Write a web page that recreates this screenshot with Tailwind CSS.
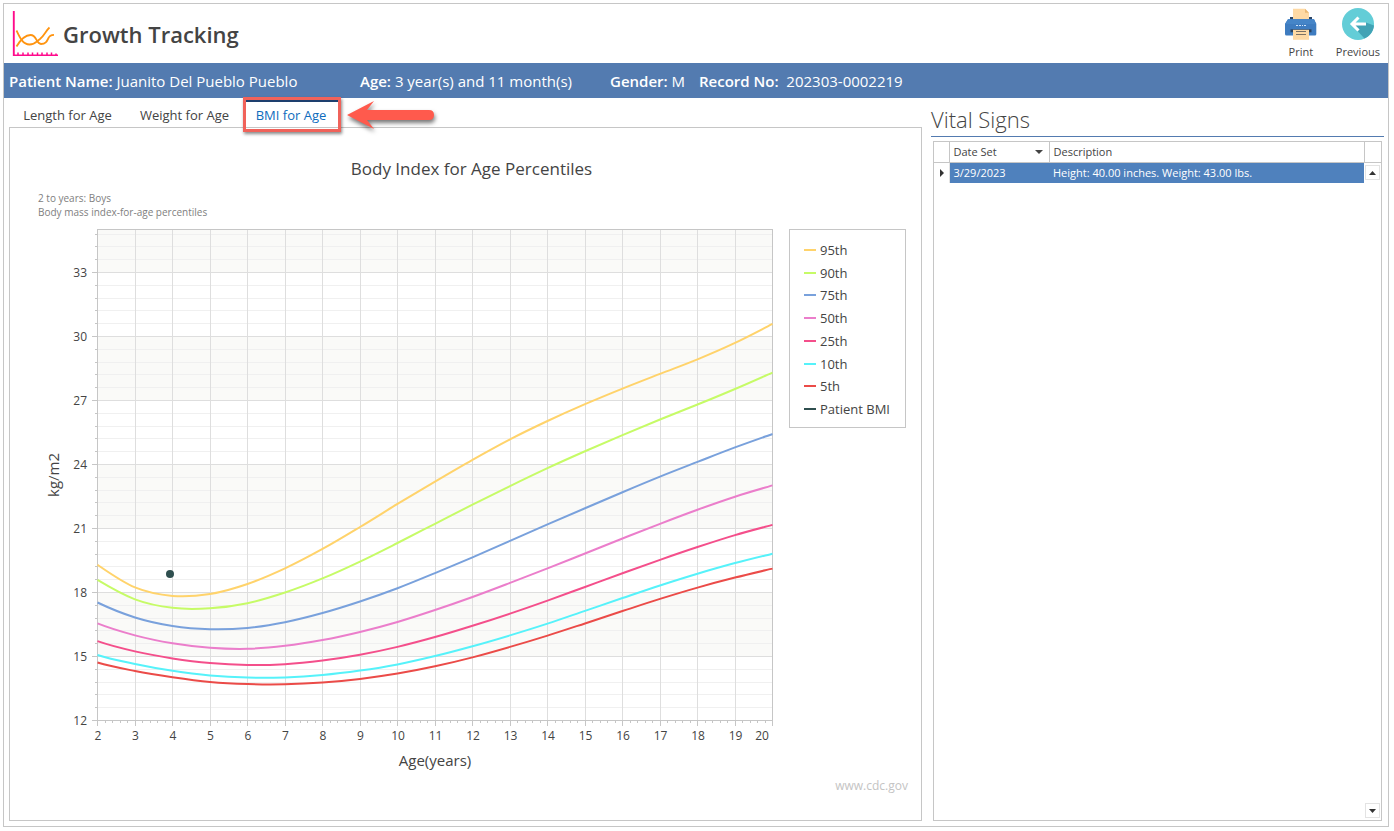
<!DOCTYPE html>
<html lang="en">
<head>
    <meta charset="UTF-8">
    <meta name="viewport" content="width=device-width, initial-scale=1.0">
    <title>Growth Tracking</title>
    <script src="https://cdn.jsdelivr.net/npm/@tailwindcss/browser@4"></script>
</head>
<body class="h-screen bg-white pt-[3px] pr-[5px] pb-1 pl-[3px] font-['Open_Sans','Noto_Sans',sans-serif] text-[#444]">

<div class="flex h-full flex-col border border-[#c6c6c6]">

    <!-- Title bar -->
    <header class="flex h-[59px] shrink-0 items-center justify-between pr-2 pl-2">
        <div class="flex items-center gap-1">
            <svg class="h-[47px] w-[47px]" viewBox="0 0 47 47" fill="none">
                <path d="M2.500 1V45.500" stroke="#ff6fb4" stroke-width="1"/>
                <path d="M1.600 1V46" stroke="#ff0a8c" stroke-width="1.500"/>
                <path d="M1 45.300H46" stroke="#ff0a8c" stroke-width="1.500"/>
                <path d="M6 42.500V45M11 42.500V45M16 42.500V45M20.500 42.500V45M25.500 42.500V45M30 42.500V45M35 42.500V45M39.500 42.500V45M44 43.500V45" stroke="#ff0a8c" stroke-width="1.500"/>
                <path d="M4.500 36.500C9 29 13 25 18.500 25C25 25 24 34 29 34C34 34 35 31 36.500 28C37.500 25.500 39 25 42 24.800" stroke="#ff9410" stroke-width="1.800"/>
                <path d="M4.500 20.500C8 28 11 34.500 17.500 34.500C23 34.500 25 31 28 29C32 26 33.500 21 37.500 17.500" stroke="#ff9410" stroke-width="1.800"/>
            </svg>
            <h1 class="pt-[2px] text-[22px] font-semibold">Growth Tracking</h1>
        </div>
        <div class="flex gap-[18px] pb-[2px] text-[11px]">
            <button type="button" class="flex flex-col items-center gap-1">
                <svg class="h-[34px] w-[34px]" viewBox="0 0 34 34">
                    <path d="M6 11h22v3H6z" fill="#2d4666"/>
                    <path d="M9 2.700h12l4 4V13.500H9z" fill="#fed9a4"/>
                    <path d="M21 2.700l4 4h-4z" fill="#e9b876"/>
                    <path d="M4 13.300h26l2.300 4.700v10q0 1.500-1.500 1.500H2.500Q1 29.500 1 28V18z" fill="#3e7cc0"/>
                    <path d="M4 13.300h26l2.300 4.700H1z" fill="#4585c8"/>
                    <path d="M12 19.500h2M15 19.500h2M18 19.500h1M20 19.500h2" stroke="#cfe5fb"/>
                    <path d="M6.500 23.300h21v3h-21z" fill="#2a435f"/>
                    <path d="M9 23.800h16v10H9z" fill="#fed9a4"/>
                    <path d="M12 25.500h10M12 28.500h10" stroke="#7c7164"/>
                </svg>
                <span class="leading-4">Print</span>
            </button>
            <button type="button" class="flex flex-col items-center gap-1">
                <svg class="h-[34px] w-[34px]" viewBox="0 0 34 34">
                    <circle cx="17" cy="18" r="16" fill="#63cdd7"/>
                    <path d="M11 19l12.500 13.500c5-2 9-7 9.500-13L25 16.500z" fill="#41a3b5"/>
                    <path d="M25 18H11M17.500 11.500l-6.500 6.500 6.500 6.500" fill="none" stroke="#fff" stroke-width="3"/>
                </svg>
                <span class="leading-4">Previous</span>
            </button>
        </div>
    </header>

    <!-- Patient information -->
    <div class="flex h-[35px] shrink-0 items-center bg-[#537bb0] pt-[2px] pl-[5px] text-[15px] whitespace-pre text-white">
        <p class="w-[351px]"><b class="font-semibold">Patient Name:</b> Juanito Del Pueblo Pueblo</p>
        <p class="w-[250px]"><b class="font-semibold">Age:</b> 3 year(s) and 11 month(s)</p>
        <p class="w-[89px]"><b class="font-semibold">Gender:</b> M</p>
        <p><b class="font-semibold">Record No:</b>  202303-0002219</p>
    </div>

    <main class="flex min-h-0 flex-1 gap-[9px] pr-1 pb-[5px] pl-[5px]">

        <!-- Charts -->
        <section class="flex min-w-0 flex-1 flex-col">
            <div role="tablist" class="flex h-[29px] shrink-0 text-[13px]">
                <button type="button" role="tab" class="w-[117px] pt-[6px]">Length for Age</button>
                <button type="button" role="tab" class="w-[117px] pt-[6px]">Weight for Age</button>
                <div class="relative mt-[2px] w-[96px]">
                    <button type="button" role="tab" aria-selected="true" class="h-full w-full border-t-2 border-[#1d3f6e] pt-[2px] text-[#0e6cbd]">BMI for Age</button>
                    <div class="absolute -top-[3px] left-0 h-[35px] w-[98px] border-3 border-[#f0625a] shadow-[1px_2px_3px_#0007]"></div>
                    <svg class="absolute -top-1 left-[102px] h-[40px] w-[94px] drop-shadow-[1px_3px_2px_#0008]" viewBox="0 0 94 40">
                        <path d="M2 19L29 5L22 14H84Q89 14 89 19T84 24H22L29 33Z" fill="#ff5a4d"/>
                    </svg>
                </div>
            </div>

            <div class="flex min-h-0 flex-1 flex-col border border-[#c6c6c6]">
                <h2 class="mt-[29px] pl-3 text-center text-[17px] leading-6">Body Index for Age Percentiles</h2>
                <p class="mt-[10px] pl-7 text-[10px] leading-[14px] text-[#808080]">2 to years: Boys<br>Body mass index-for-age percentiles</p>
                <div class="mt-[3px] flex pr-[15px]">
                    <svg id="chart" class="min-w-0 flex-1" viewBox="0 0 779 550" role="img" aria-label="Body mass index-for-age percentiles"></svg>
                    <ul id="legend" class="mt-[7px] flex h-[199px] w-[117px] flex-col justify-between border border-[#c6c6c6] pt-[9px] pb-[7px] pl-[14px] text-[13px]"></ul>
                </div>
                <a href="#" class="mt-[6px] mr-[13px] self-end text-[12px] leading-4 text-[#c4c4c4]">www.cdc.gov</a>
            </div>
        </section>

        <!-- Vital signs list -->
        <section class="flex w-[453px] shrink-0 flex-col">
            <h2 class="h-[39px] shrink-0 border-b border-[#537bb0] pt-[5px] text-[22px] leading-[33px] font-light">Vital Signs</h2>
            <div class="mt-1 mr-[2px] ml-[2px] flex min-h-0 flex-1 flex-col border border-[#c6c6c6]">
                <table class="w-full table-fixed text-left text-[11px]">
                    <thead>
                        <tr class="h-[20px] border-b border-[#c6c6c6]">
                            <th class="w-[15px] border-r border-[#c6c6c6]"></th>
                            <th class="w-[100px] border-r border-[#c6c6c6] px-1 font-normal">
                                <button type="button" class="flex w-full items-center justify-between pr-[2px]">Date Set
                                    <svg class="h-1 w-2" viewBox="0 0 8 4"><path d="M0 0h8L4 4z" fill="#444"/></svg>
                                </button>
                            </th>
                            <th class="border-r border-[#c6c6c6] px-1 font-normal">Description</th>
                            <th class="w-[17px]"></th>
                        </tr>
                    </thead>
                    <tbody>
                        <tr class="h-[21px]">
                            <td class="border-r border-[#e3e3e3]"><svg class="ml-[6px] h-2 w-1" viewBox="0 0 4 8"><path d="M0 0v8l4-4z" fill="#333"/></svg></td>
                            <td class="bg-[#4f81bd] px-1 text-white">3/29/2023</td>
                            <td class="bg-[#4f81bd] px-1 text-white">Height: 40.00 inches. Weight: 43.00 lbs.</td>
                            <td class="p-0"><button type="button" aria-label="Scroll up" class="mx-auto flex h-[15px] w-[15px] items-center justify-center border border-[#e3e3e3]"><svg class="h-1 w-[7px]" viewBox="0 0 7 4"><path d="M0 4h7L3.500 0z" fill="#333"/></svg></button></td>
                        </tr>
                    </tbody>
                </table>
                <button type="button" aria-label="Scroll down" class="mt-auto mr-px mb-[2px] flex h-[15px] w-[15px] items-center justify-center self-end border border-[#e3e3e3]"><svg class="h-1 w-[7px]" viewBox="0 0 7 4"><path d="M0 0h7L3.500 4z" fill="#333"/></svg></button>
            </div>
        </section>
    </main>
</div>

<script>
    // BMI values for every year from 2 to 20
    const series = [
        { name: "95th", color: "#ffd36b", data: [19.3, 18.24, 17.84, 17.93, 18.4, 19.13, 20.04, 21.07, 22.15, 23.2, 24.22, 25.18, 26.04, 26.83, 27.56, 28.25, 28.93, 29.7, 30.59] },
        { name: "90th", color: "#c6fb67", data: [18.59, 17.68, 17.28, 17.26, 17.5, 18.0, 18.66, 19.45, 20.32, 21.22, 22.12, 22.99, 23.83, 24.62, 25.38, 26.11, 26.81, 27.54, 28.31] },
        { name: "75th", color: "#79a1dc", data: [17.53, 16.83, 16.43, 16.28, 16.34, 16.61, 17.04, 17.58, 18.2, 18.91, 19.65, 20.42, 21.19, 21.95, 22.7, 23.43, 24.12, 24.8, 25.43] },
        { name: "50th", color: "#eb7ecb", data: [16.55, 15.99, 15.62, 15.41, 15.36, 15.5, 15.77, 16.15, 16.62, 17.18, 17.79, 18.45, 19.13, 19.83, 20.53, 21.22, 21.88, 22.49, 23.02] },
        { name: "25th", color: "#f44f8b", data: [15.72, 15.24, 14.91, 14.69, 14.6, 14.64, 14.81, 15.08, 15.45, 15.91, 16.44, 17.01, 17.62, 18.26, 18.9, 19.53, 20.13, 20.69, 21.17] },
        { name: "10th", color: "#56f2fa", data: [15.07, 14.65, 14.33, 14.11, 14.01, 14.02, 14.13, 14.34, 14.63, 15.02, 15.48, 15.99, 16.54, 17.14, 17.74, 18.33, 18.88, 19.38, 19.82] },
        { name: "5th", color: "#eb4b48", data: [14.72, 14.32, 14.03, 13.81, 13.71, 13.7, 13.78, 13.95, 14.2, 14.54, 14.96, 15.45, 15.98, 16.55, 17.13, 17.7, 18.23, 18.7, 19.12] },
        { name: "Patient BMI", color: "#2f4f4f", data: [] }
    ];

    const left = 87.5, right = 762.5, top_ = 7.5, bottom = 498.5;
    const xPos = year => left + (year - 2) * 37.5;
    const yPos = bmi => bottom - (bmi - 12) * 64 / 3;
    const snap = v => Math.floor(v) + 0.5;
    const line = (x1, y1, x2, y2, color) => `<path d="M${x1} ${y1}L${x2} ${y2}" stroke="${color}"/>`;

    // Smooth line through the yearly values
    function curve(data) {
        const p = data.map((v, i) => [xPos(i + 2), yPos(v)]);
        let d = `M${p[0]}`;
        for (let i = 0; i < p.length - 1; i++) {
            const a = p[i - 1] || [2 * p[0][0] - p[1][0], 2 * p[0][1] - p[1][1] - 6];
            const b = p[i], c = p[i + 1], e = p[i + 2] || c;
            d += `C${b[0] + (c[0] - a[0]) / 6} ${b[1] + (c[1] - a[1]) / 6} ${c[0] - (e[0] - b[0]) / 6} ${c[1] - (e[1] - b[1]) / 6} ${c}`;
        }
        return d;
    }

    let svg = "";
    // Shaded bands
    [[33, 35.02], [27, 30], [21, 24], [15, 18]].forEach(([from, to]) => {
        svg += `<rect x="${left}" y="${yPos(to)}" width="${right - left}" height="${yPos(from) - yPos(to)}" fill="#fafaf8"/>`;
    });
    // Horizontal grid, 5 steps between labels
    for (let i = 1; i <= 38; i++) {
        const y = snap(yPos(12 + i * 0.6));
        if (i % 5) svg += line(left, y, right, y, "#f0f0f0") + line(left - 2.5, y, left, y, "#c6c6c6");
    }
    for (let year = 3; year < 20; year++) {
        svg += line(snap(xPos(year)), top_, snap(xPos(year)), bottom, "#dedede");
    }
    for (let bmi = 12; bmi <= 33; bmi += 3) {
        const y = snap(yPos(bmi));
        svg += line(left, y, right, y, "#dedede") + line(left - 5.5, y, left, y, "#c6c6c6");
        svg += `<text x="${left - 10.5}" y="${y + 4}" text-anchor="end" font-size="12" fill="#444">${bmi}</text>`;
    }
    svg += `<rect x="${left}" y="${top_}" width="${right - left}" height="${bottom - top_}" fill="none" stroke="#c6c6c6"/>`;
    // Age ticks and labels
    for (let i = 0; i <= 90; i++) {
        const x = snap(xPos(2 + i / 5));
        svg += line(x, bottom, x, bottom + (i % 5 ? 2.5 : 5.5), "#c6c6c6");
    }
    for (let year = 2; year <= 20; year++) {
        svg += `<text x="${year === 20 ? 752 : xPos(year) + 0.5}" y="518" text-anchor="middle" font-size="12" fill="#444">${year}</text>`;
    }
    series.forEach(s => {
        if (s.data.length) svg += `<path d="${curve(s.data)}" fill="none" stroke="${s.color}" stroke-width="2"/>`;
    });
    svg += `<circle cx="160" cy="352" r="4" fill="#2f4f4f"/>`;
    svg += `<text x="425" y="544" text-anchor="middle" font-size="15" fill="#444">Age(years)</text>`;
    svg += `<text transform="translate(49 253) rotate(-90)" text-anchor="middle" font-size="15" fill="#444">kg/m2</text>`;
    document.getElementById("chart").innerHTML = svg;

    document.getElementById("legend").innerHTML = series.map(s => `
        <li class="flex h-[22px] items-center gap-1 leading-[22px]">
            <span class="h-[2px] w-3" style="background: ${s.color}"></span>${s.name}
        </li>`).join("");
</script>

</body>
</html>
